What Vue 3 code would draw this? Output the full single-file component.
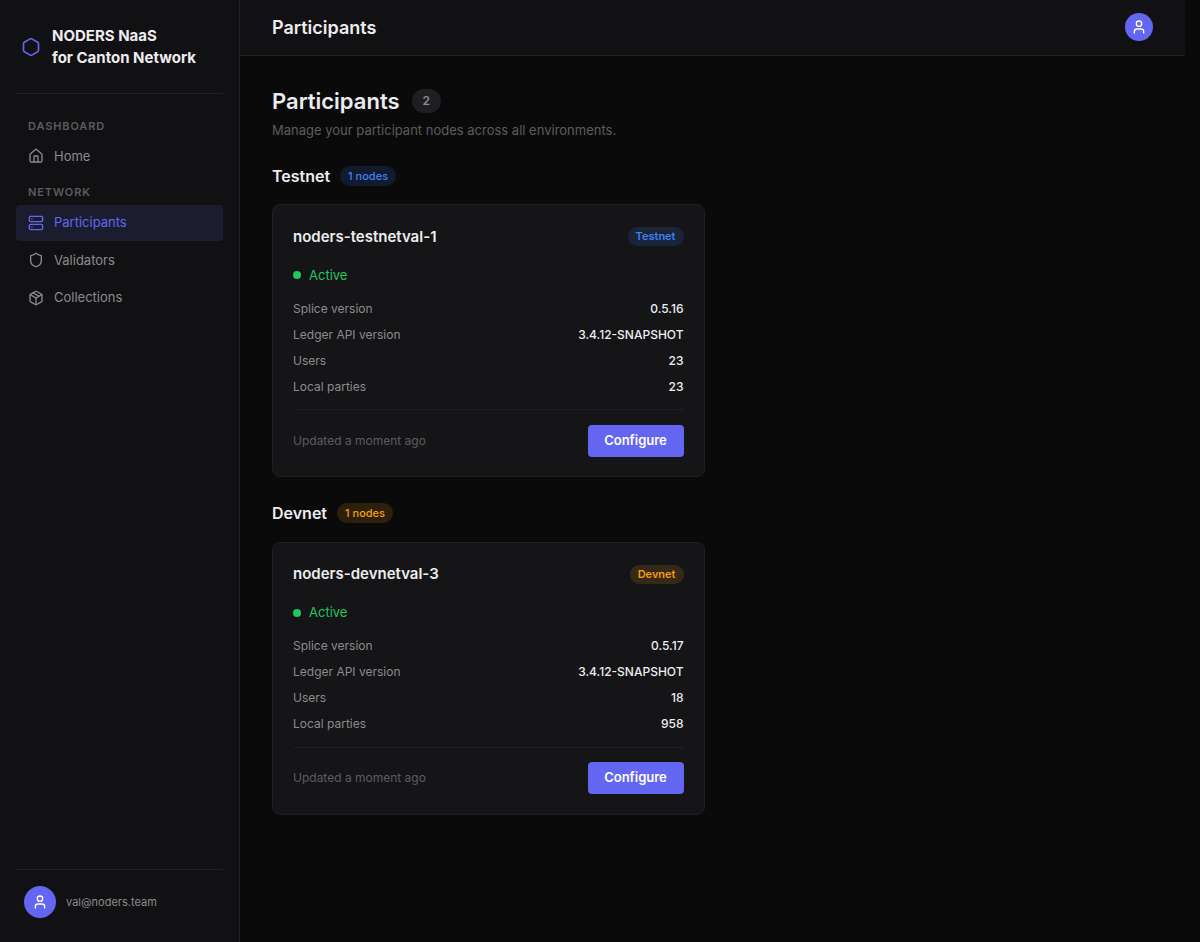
<template>
  <div class="layout">
    <aside class="sidebar">
      <div class="brand">
        <svg class="brand-icon" viewBox="0 0 24 24">
          <path d="M21 16V8a2 2 0 0 0-1-1.73l-7-4a2 2 0 0 0-2 0l-7 4A2 2 0 0 0 3 8v8a2 2 0 0 0 1 1.73l7 4a2 2 0 0 0 2 0l7-4A2 2 0 0 0 21 16z" />
        </svg>
        <div class="brand-name">NODERS NaaS<br>for Canton Network</div>
      </div>

      <nav class="nav">
        <div v-for="group in navGroups" :key="group.title" class="nav-group">
          <div class="nav-title">{{ group.title }}</div>
          <a
            v-for="item in group.items"
            :key="item.label"
            class="nav-item"
            :class="{ active: item.label === current }"
            @click="current = item.label"
          >
            <svg class="nav-icon" viewBox="0 0 24 24">
              <path v-for="d in item.paths" :key="d" :d="d" />
            </svg>
            <span>{{ item.label }}</span>
          </a>
        </div>
      </nav>

      <div class="account">
        <div class="avatar avatar-large">
          <svg viewBox="0 0 24 24">
            <circle cx="12" cy="7" r="4" />
            <path d="M19 21v-2a4 4 0 0 0-4-4H9a4 4 0 0 0-4 4v2" />
          </svg>
        </div>
        <span class="account-email">val@noders.team</span>
      </div>
    </aside>

    <div class="main">
      <header class="topbar">
        <div class="topbar-title">Participants</div>
        <div class="avatar">
          <svg viewBox="0 0 24 24">
            <circle cx="12" cy="7" r="4" />
            <path d="M19 21v-2a4 4 0 0 0-4-4H9a4 4 0 0 0-4 4v2" />
          </svg>
        </div>
      </header>

      <main class="content">
        <div class="page-heading">
          <h1>Participants</h1>
          <span class="count">{{ networks.length }}</span>
        </div>
        <p class="page-subtitle">Manage your participant nodes across all environments.</p>

        <section
          v-for="network in networks"
          :key="network.name"
          class="network"
          :class="network.name.toLowerCase()"
        >
          <div class="network-heading">
            <h2>{{ network.name }}</h2>
            <span class="badge badge-count">1 nodes</span>
          </div>
          <div class="card">
            <div class="card-header">
              <h3>{{ network.node }}</h3>
              <span class="badge">{{ network.name }}</span>
            </div>
            <div class="status"><span class="dot"></span>Active</div>
            <div class="rows">
              <div v-for="row in network.rows" :key="row[0]" class="row">
                <span class="row-label">{{ row[0] }}</span>
                <span class="row-value">{{ row[1] }}</span>
              </div>
            </div>
            <div class="card-footer">
              <span class="updated">Updated a moment ago</span>
              <button class="configure">Configure</button>
            </div>
          </div>
        </section>
      </main>
    </div>
  </div>
</template>

<script setup>
import { ref } from 'vue';

const current = ref('Participants');

const navGroups = [
  {
    title: 'DASHBOARD',
    items: [
      {
        label: 'Home',
        paths: [
          'M15 21v-8a1 1 0 0 0-1-1h-4a1 1 0 0 0-1 1v8',
          'M3 10a2 2 0 0 1 .709-1.528l7-5.999a2 2 0 0 1 2.582 0l7 5.999A2 2 0 0 1 21 10v9a2 2 0 0 1-2 2H5a2 2 0 0 1-2-2z',
        ],
      },
    ],
  },
  {
    title: 'NETWORK',
    items: [
      {
        label: 'Participants',
        paths: [
          'M4 2h16a2 2 0 0 1 2 2v4a2 2 0 0 1-2 2H4a2 2 0 0 1-2-2V4a2 2 0 0 1 2-2z',
          'M4 14h16a2 2 0 0 1 2 2v4a2 2 0 0 1-2 2H4a2 2 0 0 1-2-2v-4a2 2 0 0 1 2-2z',
          'M6 6h.01',
          'M6 18h.01',
        ],
      },
      {
        label: 'Validators',
        paths: [
          'M20 13c0 5-3.5 7.5-7.66 8.95a1 1 0 0 1-.67-.01C7.5 20.5 4 18 4 13V6a1 1 0 0 1 1-1c2 0 4.5-1.2 6.24-2.72a1.17 1.17 0 0 1 1.52 0C14.51 3.81 17 5 19 5a1 1 0 0 1 1 1z',
        ],
      },
      {
        label: 'Collections',
        paths: [
          'M11 21.73a2 2 0 0 0 2 0l7-4A2 2 0 0 0 21 16V8a2 2 0 0 0-1-1.73l-7-4a2 2 0 0 0-2 0l-7 4A2 2 0 0 0 3 8v8a2 2 0 0 0 1 1.73z',
          'M12 22V12',
          'M3.29 7L12 12L20.71 7',
          'M7.5 4.27l9 5.15',
        ],
      },
    ],
  },
];

const networks = [
  {
    name: 'Testnet',
    node: 'noders-testnetval-1',
    rows: [
      ['Splice version', '0.5.16'],
      ['Ledger API version', '3.4.12-SNAPSHOT'],
      ['Users', '23'],
      ['Local parties', '23'],
    ],
  },
  {
    name: 'Devnet',
    node: 'noders-devnetval-3',
    rows: [
      ['Splice version', '0.5.17'],
      ['Ledger API version', '3.4.12-SNAPSHOT'],
      ['Users', '18'],
      ['Local parties', '958'],
    ],
  },
];
</script>

<style>
body {
  background-color: #0a0a0a;
}
</style>

<style scoped>
.layout {
  display: flex;
  height: 100vh;
  padding-right: 15px;
  box-sizing: border-box;
  background-color: #0a0a0a;
  color: #ededef;
  font-family: Inter, "Liberation Sans", sans-serif;
  font-size: 13px;
  line-height: 1.5;
}

svg {
  fill: none;
  stroke: currentColor;
  stroke-width: 2;
  stroke-linecap: round;
  stroke-linejoin: round;
}

h1,
h2,
h3,
p {
  margin: 0;
}

.sidebar {
  display: flex;
  flex-direction: column;
  flex: none;
  width: 240px;
  padding: 0 16px;
  box-sizing: border-box;
  background-color: #111113;
  border-right: 1px solid #222225;
}

.brand {
  display: flex;
  align-items: center;
  gap: 11px;
  height: 93px;
  padding-left: 5px;
  border-bottom: 1px solid #222225;
}

.brand-icon {
  width: 20px;
  height: 20px;
  color: #6366f1;
}

.brand-name {
  font-size: 15px;
  font-weight: 700;
  line-height: 22px;
}

.nav {
  flex: 1;
  padding-top: 24px;
}

.nav-group {
  margin-bottom: 10.2px;
}

.nav-title {
  padding-left: 12px;
  margin-bottom: 4.8px;
  font-size: 11px;
  font-weight: 600;
  line-height: 16px;
  letter-spacing: 0.88px;
  color: #5c5c5f;
}

.nav-item {
  display: flex;
  align-items: center;
  gap: 10px;
  height: 35.4px;
  padding: 0 12px;
  margin-bottom: 2px;
  border-radius: 4px;
  color: #8b8b8e;
  cursor: pointer;
}

.nav-icon {
  width: 16px;
  height: 16px;
}

.nav-item.active {
  background-color: #1c1c2f;
  color: #6366f1;
}

.account {
  display: flex;
  align-items: center;
  gap: 10px;
  height: 73px;
  padding: 0 8px 8px;
  box-sizing: border-box;
  border-top: 1px solid #222225;
  font-size: 11px;
  color: #8b8b8e;
}

.avatar {
  display: flex;
  align-items: center;
  justify-content: center;
  width: 28px;
  height: 28px;
  border-radius: 50%;
  background-color: #6366f1;
  color: #ffffff;
}

.avatar svg {
  width: 16px;
  height: 16px;
}

.avatar-large {
  width: 32px;
  height: 32px;
}

.main {
  flex: 1;
}

.topbar {
  display: flex;
  align-items: center;
  justify-content: space-between;
  height: 54.8px;
  padding: 0 32px;
  background-color: #111113;
  border-bottom: 1px solid #222225;
}

.topbar-title {
  font-size: 18px;
  font-weight: 600;
}

.content {
  padding: 28.2px 32px;
}

.page-heading {
  display: flex;
  align-items: center;
  gap: 12px;
  height: 34.6px;
}

h1 {
  font-size: 22px;
  font-weight: 600;
}

.count {
  padding: 0 10.8px;
  border-radius: 12px;
  background-color: #1f1f23;
  color: #8b8b8e;
  font-size: 12px;
  font-weight: 600;
  line-height: 24px;
}

.page-subtitle {
  margin-top: 1.4px;
  line-height: 20px;
  color: #5c5c5f;
}

.network {
  margin-top: 24px;
}

.network-heading {
  display: flex;
  align-items: center;
  gap: 10px;
  height: 24px;
  margin-bottom: 16.4px;
}

h2 {
  font-size: 16px;
  font-weight: 600;
}

.badge {
  padding: 0 8px;
  border-radius: 10px;
  font-size: 11px;
  font-weight: 600;
  line-height: 19px;
}

.badge-count {
  font-weight: 500;
  line-height: 20px;
}

.testnet .badge {
  background-color: rgba(59, 130, 246, 0.15);
  color: #3b82f6;
}

.devnet .badge {
  background-color: rgba(245, 158, 11, 0.15);
  color: #f59e0b;
}

.card {
  width: 432.5px;
  height: 273px;
  padding: 20px;
  box-sizing: border-box;
  background-color: #151517;
  border: 1px solid #1f1f22;
  border-radius: 8px;
}

.card-header {
  display: flex;
  align-items: center;
  justify-content: space-between;
  height: 22.8px;
}

h3 {
  font-size: 15px;
  font-weight: 600;
}

.status {
  display: flex;
  align-items: center;
  gap: 8px;
  height: 20px;
  margin-top: 17.2px;
  color: #22c55e;
}

.dot {
  width: 8px;
  height: 8px;
  border-radius: 50%;
  background-color: #22c55e;
}

.rows {
  display: flex;
  flex-direction: column;
  gap: 8px;
  margin-top: 14.2px;
  padding-bottom: 13.8px;
  border-bottom: 1px solid #1f1f22;
}

.row {
  display: flex;
  justify-content: space-between;
  font-size: 12px;
  line-height: 18px;
}

.row-label {
  color: #8b8b8e;
}

.row-value {
  font-weight: 500;
}

.card-footer {
  display: flex;
  align-items: center;
  justify-content: space-between;
  margin-top: 14.2px;
}

.updated {
  font-size: 12px;
  color: #5c5c5f;
}

.configure {
  width: 96px;
  height: 32px;
  padding: 0;
  border: none;
  border-radius: 4px;
  background-color: #6366f1;
  color: #ffffff;
  font: inherit;
  font-weight: 600;
  cursor: pointer;
}
</style>
